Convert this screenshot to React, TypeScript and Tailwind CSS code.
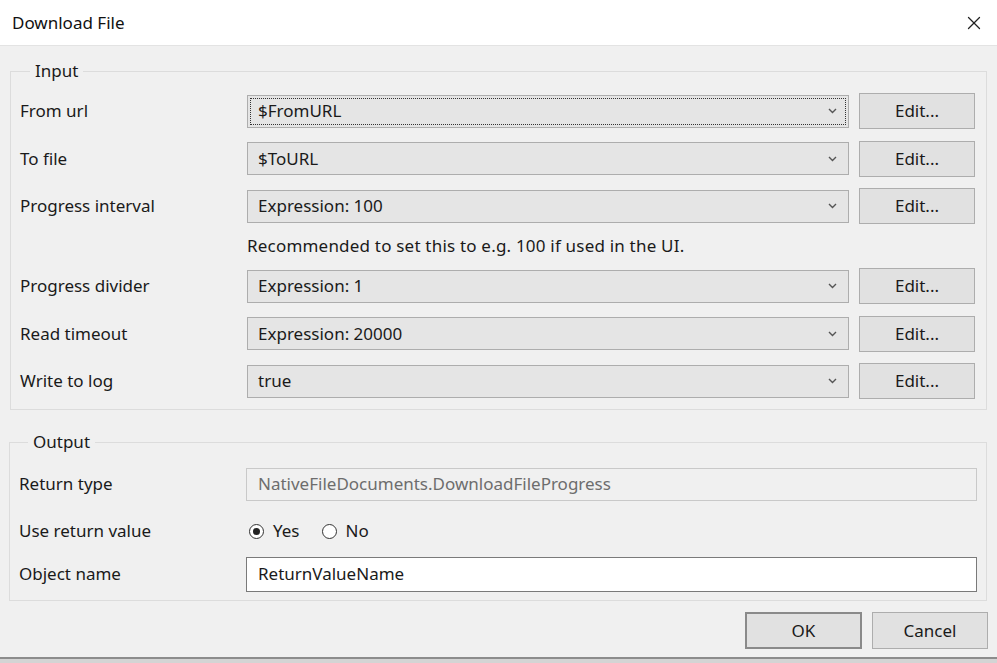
import { X } from "lucide-react";

const Chevron = () => (
  <svg width="9" height="6" viewBox="0 0 9 6" className="shrink-0">
    <polyline points="1,1 4.5,4.5 8,1" fill="none" stroke="#555" strokeWidth="1.4" />
  </svg>
);

const Combo = ({ value, focused }: { value: string; focused?: boolean }) => (
  <div className="relative flex h-[33px] w-[602px] items-center justify-between border border-[#adadad] bg-[#e5e5e5] pl-[10px] pr-[11px]">
    {focused && <span className="pointer-events-none absolute inset-[2px] border border-dotted border-[#333]" />}
    <span>{value}</span>
    <Chevron />
  </div>
);

const EditButton = () => (
  <button className="flex h-[36px] w-[116px] items-center justify-center border border-[#adadad] bg-[#e1e1e1] text-[#1a1a1a]">
    Edit...
  </button>
);

const Row = ({ label, value, focused }: { label: string; value: string; focused?: boolean }) => (
  <div className="flex h-[36px] items-center">
    <span className="w-[227px] shrink-0">{label}</span>
    <Combo value={value} focused={focused} />
    <div className="ml-[10px]">
      <EditButton />
    </div>
  </div>
);

const Radio = ({ checked, label }: { checked?: boolean; label: string }) => (
  <label className="flex items-center gap-[9px]">
    <span className="flex h-[15px] w-[15px] items-center justify-center rounded-full border border-[#333] bg-white">
      {checked && <span className="h-[7px] w-[7px] rounded-full bg-[#222]" />}
    </span>
    <span>{label}</span>
  </label>
);

export default function App() {
  return (
    <div
      className="flex h-[663px] w-[997px] flex-col overflow-hidden bg-[#f0f0f0] text-[17px] text-[#1a1a1a]"
      style={{ fontFamily: '"Noto Sans", "Open Sans", sans-serif' }}
    >
      {/* title bar */}
      <div className="flex h-[46px] shrink-0 items-center justify-between border-b border-[#e3e3e3] bg-white pl-[12px] pr-[12px]">
        <span className="text-[17px] text-[#111]">Download File</span>
        <X size={22} strokeWidth={1.4} className="text-[#222]" />
      </div>

      {/* input group */}
      <fieldset className="mx-[10px] mt-[13px] border border-[#dcdcdc] pb-[10px] pl-[9px] pr-[11px]">
        <legend className="ml-[10px] px-[5px] leading-[24px]">Input</legend>
        <div className="mt-[10px] flex flex-col gap-[11.5px]">
          <Row label="From url" value="$FromURL" focused />
          <Row label="To file" value="$ToURL" />
          <Row label="Progress interval" value="Expression: 100" />
          <div className="flex h-[21px] items-center pl-[227px] tracking-[0.2px]">
            Recommended to set this to e.g. 100 if used in the UI.
          </div>
          <Row label="Progress divider" value="Expression: 1" />
          <Row label="Read timeout" value="Expression: 20000" />
          <Row label="Write to log" value="true" />
        </div>
      </fieldset>

      {/* output group */}
      <fieldset className="mt-[20px] ml-[9px] mr-[10px] border border-[#dcdcdc] pb-[8px] pl-[9px] pr-[9px]">
        <legend className="ml-[9px] px-[5px] leading-[24px]">Output</legend>
        <div className="mt-[12px] flex flex-col">
          <div className="flex h-[36px] items-center">
            <span className="w-[227px] shrink-0">Return type</span>
            <div className="flex h-[33px] flex-1 items-center border border-[#c9c9c9] bg-[#f0f0f0] pl-[11px] text-[#6d6d6d]">
              NativeFileDocuments.DownloadFileProgress
            </div>
          </div>
          <div className="mt-[11px] flex h-[36px] items-center">
            <span className="w-[227px] shrink-0">Use return value</span>
            <div className="flex items-center gap-[22px] pl-[3px]">
              <Radio checked label="Yes" />
              <Radio label="No" />
            </div>
          </div>
          <div className="mt-[7px] flex h-[36px] items-center">
            <span className="w-[227px] shrink-0">Object name</span>
            <div className="flex h-[35px] flex-1 items-center border border-[#7a7a7a] bg-white pl-[11px]">
              ReturnValueName
            </div>
          </div>
        </div>
      </fieldset>

      {/* footer buttons */}
      <div className="mt-[11px] flex justify-end gap-[10px] pr-[9px]">
        <button className="flex h-[37px] w-[117px] items-center justify-center border-2 border-[#8a8a8a] bg-[#e1e1e1]">
          OK
        </button>
        <button className="flex h-[37px] w-[116px] items-center justify-center border border-[#adadad] bg-[#e1e1e1]">
          Cancel
        </button>
      </div>
      <div className="mt-auto h-[6px] shrink-0 border-t-2 border-[#8c8c8c] bg-[#d4d4d4]" />
    </div>
  );
}
